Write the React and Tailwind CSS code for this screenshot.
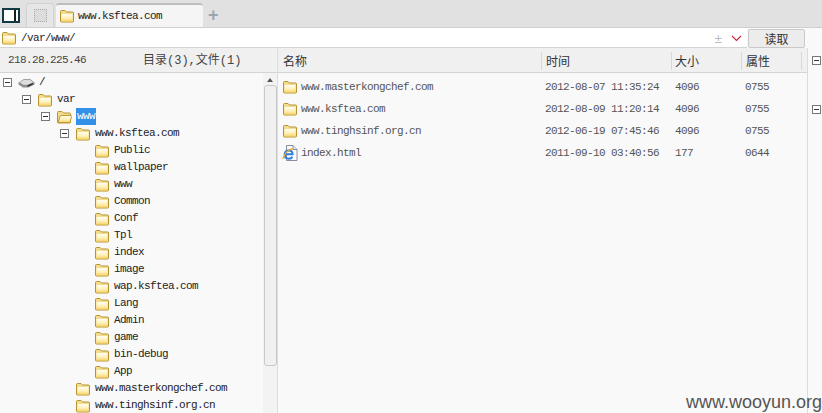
import React from "react";

const mono = "font-['Liberation_Mono','Noto_Sans_CJK_SC',monospace] text-[11px] tracking-[-0.6px]";
const cjk = "font-['Noto_Sans_CJK_SC',sans-serif] text-[12px] leading-none";

const Folder = ({ open }) => (
  <svg width="16" height="14" viewBox="0 0 16 14" className="shrink-0">
    <defs>
      <linearGradient id="fold" x1="0" y1="0" x2="0" y2="1">
        <stop offset="0" stopColor="#fffef2" />
        <stop offset="0.55" stopColor="#fff0b8" />
        <stop offset="1" stopColor="#f6d065" />
      </linearGradient>
    </defs>
    <path d="M1.5 12V2.5Q1.5 1.5 2.5 1.5H6L7.5 3H13.5Q14.5 3 14.5 4V12Q14.5 13 13.5 13H2.5Q1.5 13 1.5 12Z" fill="#f4dc8e" stroke="#b8932f" />
    {open ? (
      <path d="M2 12.5L4 6.5Q4.2 5.5 5 5.5H15Q15.8 5.5 15.5 6.5L14 12.5Z" fill="url(#fold)" stroke="#c09a35" />
    ) : (
      <path d="M2.5 5H13.5V12.5H2.5Z" fill="url(#fold)" />
    )}
  </svg>
);

const IeFile = () => (
  <svg width="16" height="16" viewBox="0 0 16 16" className="shrink-0">
    <path d="M4.5 0.5H11L15 4.5V15.5H4.5Z" fill="#fbfbff" stroke="#8a8fa0" />
    <path d="M11 0.5V4.5H15" fill="#e4e6ee" stroke="#8a8fa0" />
    <path d="M3.2 9.2H10.6C10.6 6.8 9 5.4 6.9 5.4C4.4 5.4 2.7 7.2 2.7 9.6C2.7 12 4.4 13.8 6.9 13.8C8.5 13.8 9.7 13.1 10.4 11.8" fill="none" stroke="#2b80dc" strokeWidth="2" />
    <path d="M0.8 14C2.5 8.5 6.5 4.6 10.8 3.6" fill="none" stroke="#eaa92c" strokeWidth="1.2" />
  </svg>
);

const Drive = () => (
  <svg width="17" height="12" viewBox="0 0 17 12" className="shrink-0">
    <path d="M0.5 5.5L6 2H12L16.5 5.5V7.5L10.5 10.5H5L0.5 7.5Z" fill="#8f8f8f" />
    <path d="M1.5 5.3L6.3 2.8H11.7L15.3 5.3L10.3 7.8H5.3Z" fill="#dedede" />
    <path d="M9.5 9L15 6.6" fill="none" stroke="#2e2e2e" strokeWidth="1.4" />
  </svg>
);

const Minus = () => (
  <span className="flex h-[9px] w-[9px] shrink-0 items-center justify-center border border-[#777] bg-white">
    <span className="h-px w-[5px] bg-[#333]" />
  </span>
);

const tree = [
  { d: 0, t: "/", drive: true, exp: true },
  { d: 1, t: "var", exp: true },
  { d: 2, t: "www", exp: true, sel: true, open: true },
  { d: 3, t: "www.ksftea.com", exp: true },
  { d: 4, t: "Public" },
  { d: 4, t: "wallpaper" },
  { d: 4, t: "www" },
  { d: 4, t: "Common" },
  { d: 4, t: "Conf" },
  { d: 4, t: "Tpl" },
  { d: 4, t: "index" },
  { d: 4, t: "image" },
  { d: 4, t: "wap.ksftea.com" },
  { d: 4, t: "Lang" },
  { d: 4, t: "Admin" },
  { d: 4, t: "game" },
  { d: 4, t: "bin-debug" },
  { d: 4, t: "App" },
  { d: 3, t: "www.masterkongchef.com" },
  { d: 3, t: "www.tinghsinf.org.cn" },
];

const indents = ["pl-[3px]", "pl-[22px]", "pl-[41px]", "pl-[60px]", "pl-[79px]"];

const files = [
  { name: "www.masterkongchef.com", time: "2012-08-07 11:35:24", size: "4096", attr: "0755" },
  { name: "www.ksftea.com", time: "2012-08-09 11:20:14", size: "4096", attr: "0755" },
  { name: "www.tinghsinf.org.cn", time: "2012-06-19 07:45:46", size: "4096", attr: "0755" },
  { name: "index.html", time: "2011-09-10 03:40:56", size: "177", attr: "0644", ie: true },
];

const cols = "grid grid-cols-[263px_130px_70px_61px]";

export default function App() {
  return (
    <div className="relative flex h-[413px] w-[822px] flex-col overflow-hidden bg-[#f9f9f9]">
      {/* tabs */}
      <div className="flex h-[28px] shrink-0 items-end border-b border-[#cfcfcf] bg-[#e1e1e1] pl-[2px]">
        <div className="mb-[4px] flex h-[15px] w-[18px] justify-end border-2 border-[#123a44] bg-white pr-[2px]">
          <div className="w-[2px] bg-[#1c1c1c]" />
        </div>
        <div className="ml-[6px] flex h-[24px] w-[28px] items-center justify-center rounded-t-[3px] border border-b-0 border-[#d2d2d2] bg-[#e6e6e6]">
          <div className="h-[13px] w-[13px] border border-dotted border-[#aaa] bg-[#dcdcdc]" />
        </div>
        <div className="ml-[2px] flex h-[24px] w-[147px] items-center gap-[3px] rounded-t-[3px] border-t-2 border-[#bdbdbd] bg-[#f5f5f5] pl-[3px]">
          <Folder />
          <span className={`${mono} text-[#222]`}>www.ksftea.com</span>
        </div>
        <div className="ml-[5px] mb-[3px] font-['Liberation_Sans',sans-serif] text-[18px] font-bold leading-none text-[#9aa6b4]">+</div>
      </div>

      {/* address */}
      <div className="flex h-[20px] shrink-0 items-center">
        <div className="flex h-full w-[747px] items-center border-b border-[#d4d4d4] bg-white pl-[1px] pr-[5px] pt-[1px]">
          <Folder />
          <span className={`${mono} ml-[4px] flex-1 pt-[1px] text-[#222]`}>/var/www/</span>
          <span className="mr-[9px] font-['Liberation_Sans',sans-serif] text-[13px] leading-none text-[#bbb]">±</span>
          <svg width="11" height="7" viewBox="0 0 11 7">
            <path d="M1 1L5.5 5.5L10 1" fill="none" stroke="#c4243f" strokeWidth="1.1" />
          </svg>
        </div>
        <div className={`${cjk} ml-[1px] flex h-[19px] w-[57px] items-center justify-center rounded-[2px] border border-[#c9c9c9] bg-[#ececec] pt-[1px] text-[#333]`}>
          读取
        </div>
      </div>

      <div className="flex min-h-0 flex-1">
        {/* tree pane */}
        <div className="flex w-[278px] shrink-0 flex-col border-r border-[#dcdcdc]">
          <div className="flex h-[25px] shrink-0 items-center border-b border-[#d4d4d4] bg-[#f0f0f0] pl-[8px] pt-[1px] text-[#444]">
            <span className={`${mono} w-[135px]`}>218.28.225.46</span>
            <span className={`${mono} !text-[12px] !tracking-normal`}>目录(3),文件(1)</span>
          </div>
          <div className="flex min-h-0 flex-1">
            <div className="min-w-0 flex-1 pt-[1px]">
              {tree.map((r, i) => (
                <div key={i} className={`flex h-[17px] items-center ${indents[r.d]}`}>
                  <span className="flex w-[15px] shrink-0">{r.exp && <Minus />}</span>
                  {r.drive ? <Drive /> : <Folder open={r.open} />}
                  <span
                    className={`${mono} ml-[4px] whitespace-nowrap ${r.sel ? "ml-[3px] bg-[#3390e8] px-[1px] leading-[17px] text-white" : "text-[#222]"} ${r.drive ? "ml-[3px]" : ""}`}
                  >
                    {r.t}
                  </span>
                </div>
              ))}
            </div>
            {/* scrollbar */}
            <div className="flex w-[14px] shrink-0 flex-col items-center bg-[#f3f3f3]">
              <div className="mt-[5px] h-0 w-0 border-x-[3px] border-b-[4px] border-x-transparent border-b-[#555]" />
              <div className="mt-[3px] h-[281px] w-[13px] rounded-[3px] border border-[#c8c8c8] bg-[#f0f0f0]" />
            </div>
          </div>
        </div>

        {/* file list */}
        <div className="flex min-w-0 flex-1 flex-col">
          <div className={`${cols} h-[25px] shrink-0 items-center border-b border-[#d4d4d4] bg-[#f0f0f0] pt-[1px] text-[#333]`}>
            <span className={`${cjk} pl-[5px]`}>名称</span>
            <span className={`${cjk} border-l border-[#d8d8d8] py-[3px] pl-[4px]`}>时间</span>
            <span className={`${cjk} border-l border-[#d8d8d8] py-[3px] pl-[3px]`}>大小</span>
            <span className={`${cjk} border-r border-l border-[#d8d8d8] py-[3px] pl-[4px]`}>属性</span>
          </div>
          <div className="flex flex-col pt-[3px]">
            {files.map((f) => (
              <div key={f.name} className={`${cols} ${mono} h-[22px] items-center text-[#555]`}>
                <div className="flex items-center gap-[3px] pl-[4px]">
                  {f.ie ? <IeFile /> : <Folder />}
                  <span>{f.name}</span>
                </div>
                <span className="pl-[4px]">{f.time}</span>
                <span className="pl-[4px]">{f.size}</span>
                <span className="pl-[4px]">{f.attr}</span>
              </div>
            ))}
          </div>
        </div>

        {/* side strip */}
        <div className="flex w-[15px] shrink-0 flex-col border-l border-[#dcdcdc] bg-[#f9f9f9] pl-[4px] pt-[8px]">
          <Minus />
          <div className="mt-[40px]">
            <Minus />
          </div>
        </div>
      </div>

      <div className="absolute bottom-[0px] right-0 font-['Liberation_Sans',sans-serif] text-[18px] leading-[21px] text-[#555]">
        www.wooyun.org
      </div>
    </div>
  );
}
